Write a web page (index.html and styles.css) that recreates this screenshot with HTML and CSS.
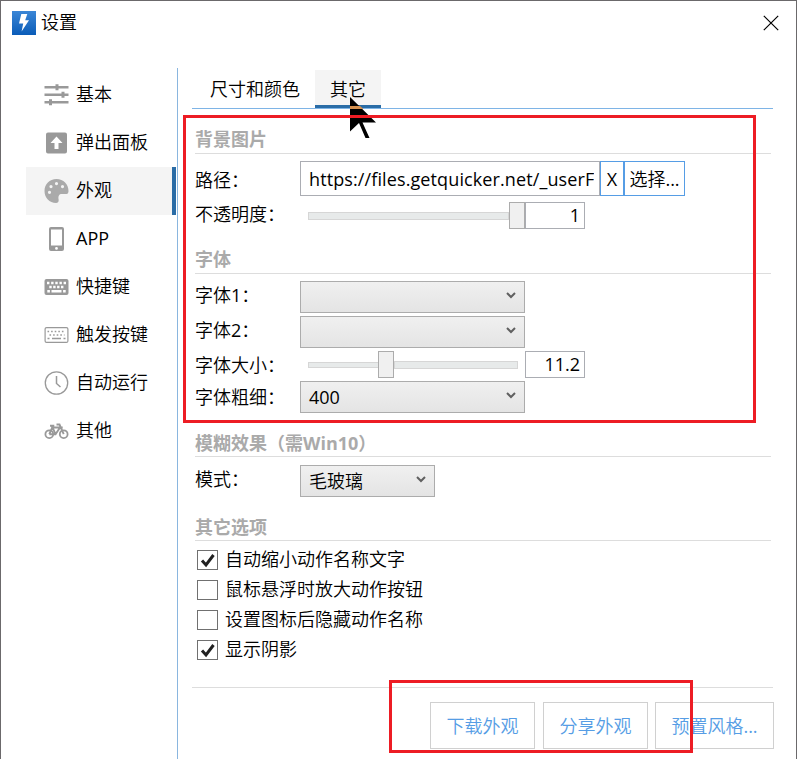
FILE: index.html
```html
<!DOCTYPE html>
<html lang="zh-CN">
<head>
<meta charset="utf-8">
<title>设置</title>
<link rel="stylesheet" href="styles.css">
</head>
<body>
<div class="window">
  <header class="titlebar">
    <svg class="logo" width="24" height="24" viewBox="0 0 24 24"><defs><linearGradient id="lg" x1="0" y1="0" x2="0" y2="1"><stop offset="0" stop-color="#3b86d6"/><stop offset="1" stop-color="#0a5cb8"/></linearGradient></defs><rect width="24" height="24" fill="url(#lg)"/><path d="M9.3 3h6L13.2 9.2H17L9.6 20.5l1.6-8H7z" fill="#fff"/></svg>
    <span class="title">设置</span>
    <svg class="close" width="16" height="16" viewBox="0 0 16 16"><path d="M.8.8l14.4 14.4M15.2.8L.8 15.2" stroke="#000" stroke-width="1.2"/></svg>
  </header>
  <div class="body">
    <nav class="sidebar">
      <a class="item"><svg class="icon" viewBox="0 0 24 24"><path d="M0 3h24v2.500H0zM0 10.500h24V13H0zM0 18h24v2.500H0zM11 1.200h3v6h-3zM17 8.700h3v6h-3zM4.500 16.200h3v6h-3z"/></svg><span>基本</span></a>
      <a class="item"><svg class="icon" viewBox="0 0 24 24"><path fill-rule="evenodd" d="M3.500 1.500h17a2 2 0 0 1 2 2v17a2 2 0 0 1-2 2h-17a2 2 0 0 1-2-2v-17a2 2 0 0 1 2-2zM12 5.500l-6 6.500h4v6h4v-6h4z"/></svg><span>弹出面板</span></a>
      <a class="item selected"><svg class="icon soft" viewBox="0 0 24 24"><path fill-rule="evenodd" d="M12 0C5 0 0 5.300 0 12s5 12 11.500 12c2 0 3-1.500 2.600-3.500-.6-3.500.4-5.500 3.400-5.500H22c1.500 0 2-1.500 2-3C24 5 19 0 12 0zM5 11.700a1.600 1.600 0 1 1 0 3.200 1.600 1.600 0 0 1 0-3.200zM6.500 6a1.600 1.600 0 1 1 0 3.200A1.600 1.600 0 0 1 6.500 6zM12 3a1.600 1.600 0 1 1 0 3.200A1.600 1.600 0 0 1 12 3zM18 6a1.600 1.600 0 1 1 0 3.200A1.600 1.600 0 0 1 18 6z"/></svg><span>外观</span></a>
      <a class="item"><svg class="icon" viewBox="0 0 24 24"><path fill-rule="evenodd" d="M6.500 0h11a2 2 0 0 1 2 2v20a2 2 0 0 1-2 2h-11a2 2 0 0 1-2-2V2a2 2 0 0 1 2-2zM6.500 2.500v16h11v-16zM12 20a1.400 1.400 0 1 0 0 2.800 1.400 1.400 0 0 0 0-2.800z"/></svg><span>APP</span></a>
      <a class="item"><svg class="icon" viewBox="0 0 24 24"><rect y="4" width="24" height="16" rx="2"/><path d="M2.500 8h19" stroke="#fff" stroke-width="2.400" stroke-dasharray="2.400 1.750"/><path d="M4.800 12h15" stroke="#fff" stroke-width="2.400" stroke-dasharray="2.400 1.500"/><path d="M2.800 16.200h2.600M7 16.200h10M18.600 16.200h2.600" stroke="#fff" stroke-width="2.400"/></svg><span>快捷键</span></a>
      <a class="item"><svg class="icon line" viewBox="0 0 24 24"><rect x=".6" y="4.600" width="22.800" height="14.800" rx="1.500" stroke-width="1.200"/><path d="M3 8.500h18M5 12h15" stroke-width="1.600" stroke-dasharray="1.600 2"/><path d="M3 15.600h2M7.500 15.600h9M19 15.600h2" stroke-width="1.500"/></svg><span>触发按键</span></a>
      <a class="item"><svg class="icon line" viewBox="0 0 24 24"><circle cx="12" cy="12" r="11.200" stroke-width="1.300"/><path d="M12 5v7.500l4 3.500" stroke-width="1.500"/></svg><span>自动运行</span></a>
      <a class="item"><svg class="icon line" viewBox="0 0 24 24"><circle cx="4.800" cy="15.200" r="3.900" stroke-width="1.800"/><circle cx="19.200" cy="15.200" r="3.900" stroke-width="1.800"/><path d="M4.800 15.200l3-6.700h7.700l-4.500 6.700H4.800M8 8.500l3 6.700M19.200 15.200L15 5.500h-3M5.500 6.800h4.300M7.600 6.800v2M15.500 8.500h2.700" stroke-width="1.900"/></svg><span>其他</span></a>
    </nav>
    <main class="content">
      <div class="tabs"><div class="tab">尺寸和颜色</div><div class="tab active">其它</div></div>

      <section class="group">
        <h2>背景图片</h2>
        <div class="row path-row"><label>路径：</label><div class="textbox url"><span>https://files.getquicker.net/_userF</span></div><button class="small clear">X</button><button class="small choose">选择...</button></div>
        <div class="row slider-row"><label>不透明度：</label><div class="slider full"><i class="thumb"></i></div><div class="textbox number">1</div></div>
      </section>

      <section class="group fonts">
        <h2>字体</h2>
        <div class="row"><label>字体1：</label><div class="combo"><span></span><svg width="10" height="7" viewBox="0 0 10 7"><path d="M1 1l4 4 4-4"/></svg></div></div>
        <div class="row"><label>字体2：</label><div class="combo"><span></span><svg width="10" height="7" viewBox="0 0 10 7"><path d="M1 1l4 4 4-4"/></svg></div></div>
        <div class="row slider-row"><label class="low">字体大小：</label><div class="slider size"><i class="thumb"></i></div><div class="textbox number">11.2</div></div>
        <div class="row"><label class="low">字体粗细：</label><div class="combo"><span>400</span><svg width="10" height="7" viewBox="0 0 10 7"><path d="M1 1l4 4 4-4"/></svg></div></div>
      </section>

      <section class="group blur">
        <h2>模糊效果（需Win10）</h2>
        <div class="row"><label>模式：</label><div class="combo narrow"><span>毛玻璃</span><svg width="10" height="7" viewBox="0 0 10 7"><path d="M1 1l4 4 4-4"/></svg></div></div>
      </section>

      <section class="group options">
        <h2>其它选项</h2>
        <div class="check"><i class="box"><svg viewBox="0 0 18 18"><path d="M3.500 9.500l4 4.500L15 4"/></svg></i><span>自动缩小动作名称文字</span></div>
        <div class="check"><i class="box"></i><span>鼠标悬浮时放大动作按钮</span></div>
        <div class="check"><i class="box"></i><span>设置图标后隐藏动作名称</span></div>
        <div class="check"><i class="box"><svg viewBox="0 0 18 18"><path d="M3.500 9.500l4 4.500L15 4"/></svg></i><span>显示阴影</span></div>
      </section>

      <footer class="actions"><button>下载外观</button><button>分享外观</button><button class="preset">预置风格...</button></footer>
    </main>
  </div>
  <svg class="cursor" width="28" height="44" viewBox="0 0 28 44"><path d="M1 1v34.500l9-8.500 6.500 15h4L13.500 26.500H27z"/><path class="overlap" d="M1 10h10l3.500 3H1z"/></svg>
  <div class="mark mark-top"></div>
  <div class="mark mark-bottom"></div>
</div>
</body>
</html>
```
FILE: styles.css
```css
* { box-sizing: border-box; }
body {
  margin: 0;
  font: 18px/24px "Open Sans", "Noto Sans CJK SC DemiLight", "Noto Sans CJK SC", sans-serif;
  color: #000;
  background: #fff;
}
.window {
  position: relative;
  height: 759px;
  border: 1px solid #6b696b;
  border-bottom: 0;
  overflow: hidden;
}
.titlebar {
  display: flex;
  align-items: center;
  height: 67px;
  padding: 0 17px 24px 11px;
}
.title { margin: -1px 0 0 5px; flex: 1; }
.close { display: block; }
.body { display: flex; height: 691px; }

.sidebar {
  width: 177px;
  padding: 3px 1px 0 25px;
  border-right: 1px solid #8ab6df;
}
.item {
  display: flex;
  align-items: center;
  height: 48px;
  padding-left: 18px;
  border-right: 4px solid transparent;
}
.item span { margin-top: -2px; }
.item.selected { background: #f4f4f4; border-right-color: #2a6ca6; }
.icon { width: 25px; height: 24px; margin: -1px 7px 0 0; fill: #999; }
.icon.soft { fill: #aaa; }
.icon.line { fill: none; stroke: #999; }

.content { flex: 1; padding: 2px 23px 0 14px; }
.tabs {
  display: flex;
  height: 39px;
  border-bottom: 1px solid #7eb4e6;
}
.tab { padding: 7px 15px 0 18px; border-bottom: 3px solid transparent; }
.tab.active { width: 66px; padding-left: 15px; background: #f4f4f4; border-color: #2a6ca6; }

.group { margin: 16px 2px 0 3px; }
h2 {
  height: 29px;
  margin: 0 0 7px;
  padding-top: 2px;
  font: inherit;
  font-family: "Open Sans", "Noto Sans CJK SC", sans-serif;
  font-weight: 700;
  color: #aaa;
  border-bottom: 1px solid #ddd;
}
.row { display: flex; height: 32px; margin-bottom: 3px; }
.row label { width: 105px; align-self: center; margin-top: -4px; white-space: nowrap; }
.row label.low { margin-top: 0; }
.path-row { height: 35px; margin-bottom: 6px; }
.path-row label { margin-top: 3px; }
.slider-row { height: 27px; }
.textbox {
  display: flex;
  align-items: center;
  border: 1px solid #abadb3;
  background: #fff;
}
.url { width: 300px; padding: 0 5px 0 8px; white-space: nowrap; }
.url span { width: 286px; overflow: hidden; letter-spacing: 0.11px; }
.number { width: 60px; justify-content: flex-end; padding: 0 4px 2px 0; }
.small {
  padding: 0;
  font: inherit;
  color: #000;
  background: #fff;
  border: 1px solid #569de5;
}
.clear { width: 24px; }
.choose { width: 61px; }
.slider {
  display: flex;
  align-items: center;
  width: 225px;
  padding: 0 7px 0 8px;
}
.slider::before, .slider::after {
  content: "";
  height: 6px;
  border: 1px solid #d6d6d6;
  background: #e7eaea;
}
.thumb { width: 16px; height: 27px; border: 1px solid #acacac; background: #f0f0f0; }
.slider.full { padding-right: 0; }
.full::before { flex: 1; }
.full::after { display: none; }
.size::before { width: 70px; border-right: 0; }
.slider.size::before, .size .thumb { flex: none; box-sizing: border-box; }
.size::after { flex: 1; }
.combo {
  display: flex;
  align-items: center;
  justify-content: space-between;
  width: 225px;
  padding: 0 8px;
  border: 1px solid #acacac;
  background: linear-gradient(#f0f0f0, #e4e4e4);
}
.combo svg { margin-top: -3px; fill: none; stroke: #606060; stroke-width: 2; }
.combo.narrow { width: 135px; }
.fonts { height: 168px; }
.blur, .options { margin-top: 15px; }
.blur h2, .options h2 { padding-top: 3px; }
.blur h2 { margin-bottom: 8px; }
.blur .row { margin-bottom: 0; }

.options h2 { margin-bottom: 4px; }
.check { display: flex; align-items: center; height: 30px; padding-left: 2px; }
.check span { margin-top: -2px; }
.box { width: 21px; height: 20px; margin-right: 7px; border: 1px solid #707070; background: #fff; }
.box svg { display: block; width: 19px; height: 18px; fill: none; stroke: #212121; stroke-width: 3; }

.actions {
  display: flex;
  justify-content: flex-end;
  margin-top: 22px;
  padding-top: 14px;
  border-top: 1px solid #ddd;
}
.actions button {
  width: 105px;
  height: 47px;
  margin-right: 8px;
  padding: 0;
  font: inherit;
  color: #569de5;
  background: #fff;
  border: 1px solid #d0d0d0;
}
.actions button:nth-child(2) { margin-right: 7px; }
.actions .preset { width: 119px; margin-right: -1px; }

.cursor { position: absolute; left: 348px; top: 95px; }
.cursor .overlap { fill: #d4904f; }
.mark { position: absolute; border: 3px solid #ed1c24; }
.mark-top { left: 182px; top: 114px; width: 573px; height: 308px; }
.mark-bottom { left: 388px; top: 679px; width: 304px; height: 73px; }
```
